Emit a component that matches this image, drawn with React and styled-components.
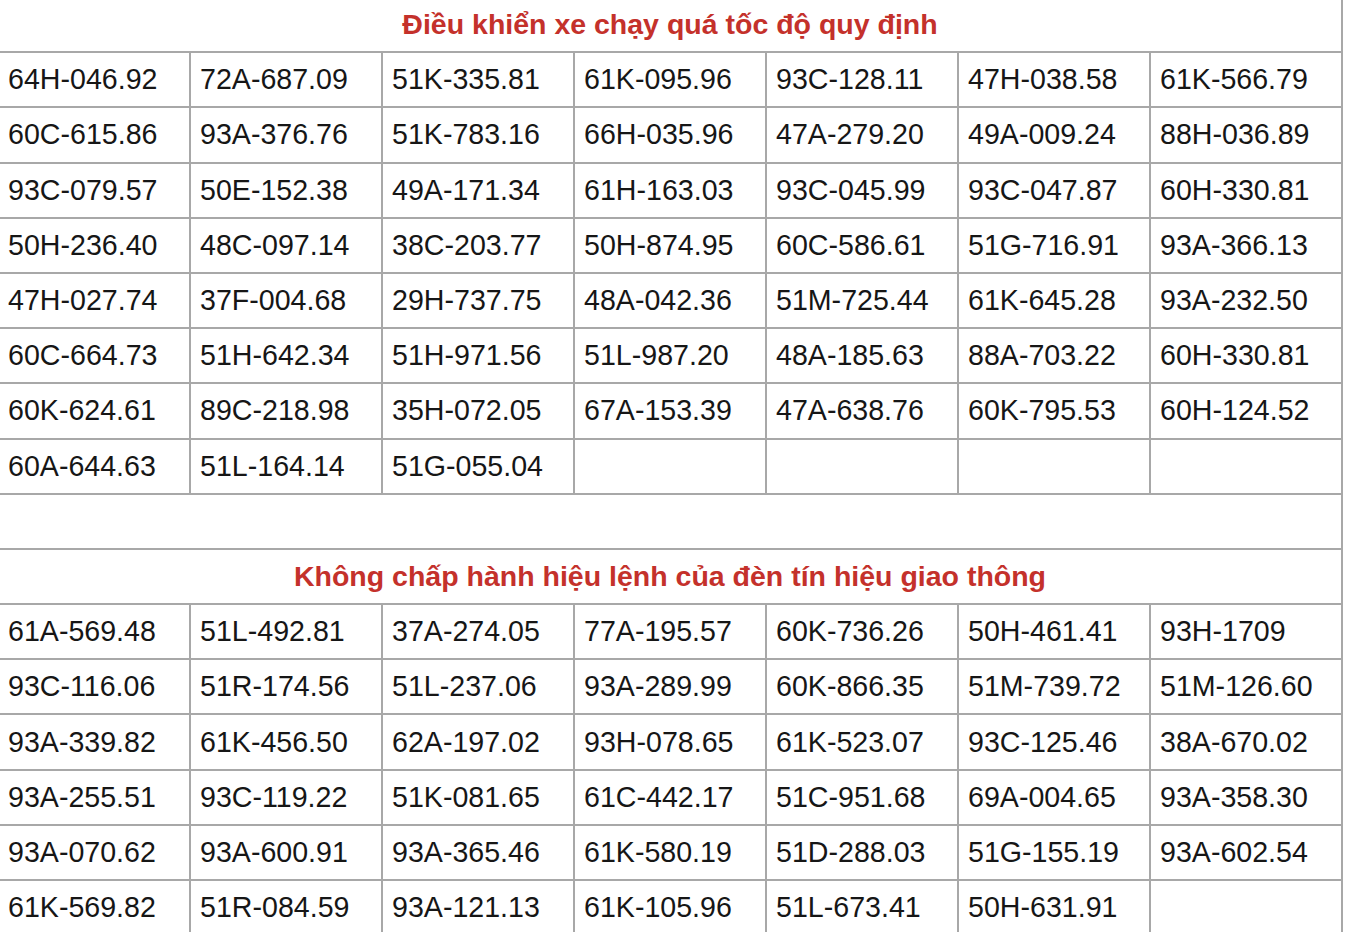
import styled, { createGlobalStyle } from "styled-components";

const GlobalStyle = createGlobalStyle`
  html, body {
    margin: 0;
    padding: 0;
    background: #ffffff;
    overflow: hidden;
  }
  body {
    font-family: "Liberation Sans", Arial, sans-serif;
  }
`;

const Sheet = styled.div`
  display: grid;
  grid-template-columns: repeat(7, 192px);
  grid-auto-rows: 55.2px;
  margin: -4px 0 0 -3px;
  width: max-content;
  border-left: 2px solid #a8a8a8;
  border-top: 2px solid #a8a8a8;
`;

const Cell = styled.div`
  box-sizing: border-box;
  display: flex;
  align-items: center;
  padding-left: 9px;
  border-right: 2px solid #a8a8a8;
  border-bottom: 2px solid #a8a8a8;
  font-size: 28.6px;
  color: #161616;
  white-space: nowrap;
`;

const WideRow = styled(Cell)`
  grid-column: 1 / -1;
  justify-content: center;
  padding-left: 0;
  font-size: 28.5px;
  font-weight: 700;
  color: ${(p) => p.$color || "#c4312b"};
`;

const speeding = [
  ["64H-046.92", "72A-687.09", "51K-335.81", "61K-095.96", "93C-128.11", "47H-038.58", "61K-566.79"],
  ["60C-615.86", "93A-376.76", "51K-783.16", "66H-035.96", "47A-279.20", "49A-009.24", "88H-036.89"],
  ["93C-079.57", "50E-152.38", "49A-171.34", "61H-163.03", "93C-045.99", "93C-047.87", "60H-330.81"],
  ["50H-236.40", "48C-097.14", "38C-203.77", "50H-874.95", "60C-586.61", "51G-716.91", "93A-366.13"],
  ["47H-027.74", "37F-004.68", "29H-737.75", "48A-042.36", "51M-725.44", "61K-645.28", "93A-232.50"],
  ["60C-664.73", "51H-642.34", "51H-971.56", "51L-987.20", "48A-185.63", "88A-703.22", "60H-330.81"],
  ["60K-624.61", "89C-218.98", "35H-072.05", "67A-153.39", "47A-638.76", "60K-795.53", "60H-124.52"],
  ["60A-644.63", "51L-164.14", "51G-055.04", "", "", "", ""],
];

const redLight = [
  ["61A-569.48", "51L-492.81", "37A-274.05", "77A-195.57", "60K-736.26", "50H-461.41", "93H-1709"],
  ["93C-116.06", "51R-174.56", "51L-237.06", "93A-289.99", "60K-866.35", "51M-739.72", "51M-126.60"],
  ["93A-339.82", "61K-456.50", "62A-197.02", "93H-078.65", "61K-523.07", "93C-125.46", "38A-670.02"],
  ["93A-255.51", "93C-119.22", "51K-081.65", "61C-442.17", "51C-951.68", "69A-004.65", "93A-358.30"],
  ["93A-070.62", "93A-600.91", "93A-365.46", "61K-580.19", "51D-288.03", "51G-155.19", "93A-602.54"],
  ["61K-569.82", "51R-084.59", "93A-121.13", "61K-105.96", "51L-673.41", "50H-631.91", ""],
];

function Section({ title, rows }) {
  return (
    <>
      <WideRow>{title}</WideRow>
      {rows.map((row, r) =>
        row.map((plate, c) => <Cell key={`${r}-${c}`}>{plate}</Cell>)
      )}
    </>
  );
}

export default function App() {
  return (
    <>
      <GlobalStyle />
      <Sheet>
        <Section title="Điều khiển xe chạy quá tốc độ quy định" rows={speeding} />
        <WideRow />
        <Section
          title="Không chấp hành hiệu lệnh của đèn tín hiệu giao thông"
          rows={redLight}
        />
      </Sheet>
    </>
  );
}
